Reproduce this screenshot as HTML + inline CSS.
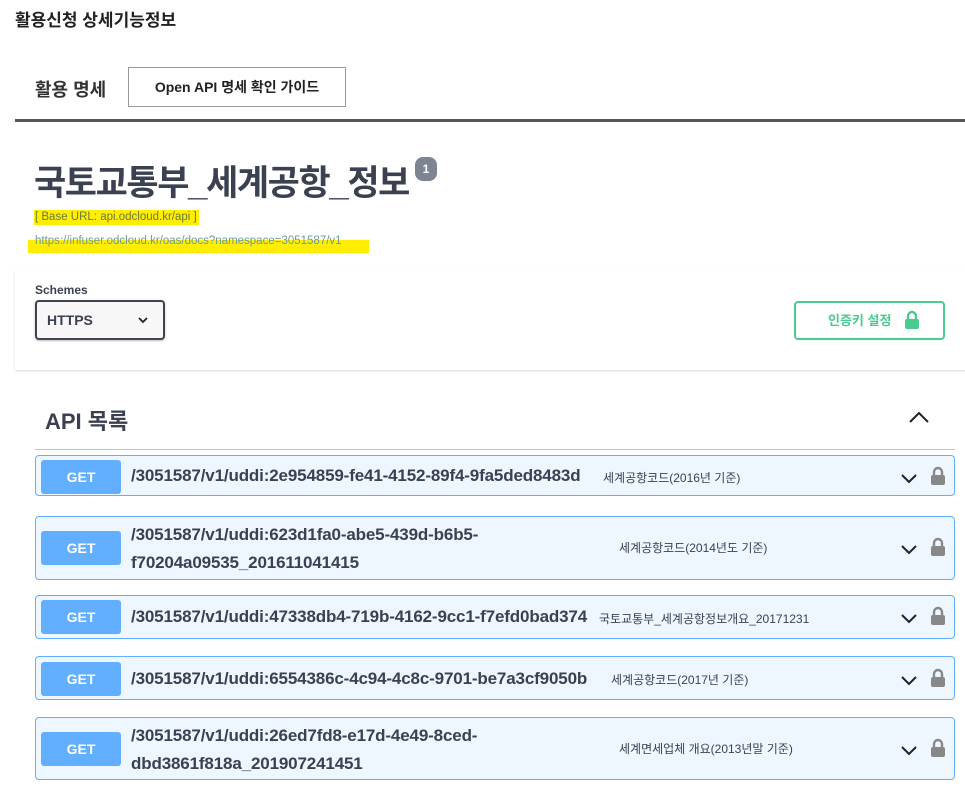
<!DOCTYPE html>
<html><head><meta charset="utf-8"><style>
*{box-sizing:border-box;margin:0;padding:0}
body{width:965px;height:788px;overflow:hidden;background:#fff;font-family:"Liberation Sans","Noto Sans CJK KR",sans-serif;color:#3b4151;position:relative}
.a{position:absolute}
.row{position:absolute;left:35px;width:920px;background:#eef6ff;border:1px solid #61affe;border-radius:4px}
.get{position:absolute;left:5px;width:80px;height:34px;background:#61affe;border-radius:3px;color:#fff;font-weight:700;font-size:14px;text-align:center;line-height:34px}
.path{position:absolute;left:95px;font-size:17px;font-weight:600;color:#3b4151;line-height:28px;letter-spacing:-0.15px}
.desc{position:absolute;font-size:12px;color:#3b4151}
.chev{position:absolute;right:36px}
.lock{position:absolute;right:8px}
</style></head><body>
<div class="a" style="left:15px;top:6px;font-size:17px;font-weight:700;color:#222">활용신청 상세기능정보</div>
<div class="a" style="left:35px;top:76px;font-size:18px;font-weight:700;color:#333">활용 명세</div>
<div class="a" style="left:128px;top:67px;width:218px;height:40px;border:1px solid #999;font-size:14px;font-weight:700;color:#222;text-align:center;line-height:38px">Open API 명세 확인 가이드</div>
<div class="a" style="left:15px;top:119px;width:950px;height:3px;background:#555"></div>

<div class="a" style="left:34px;top:155px;font-size:35px;font-weight:700;color:#3b4151;letter-spacing:-1.4px">국토교통부_세계공항_정보</div>
<div class="a" style="left:415px;top:157px;width:22px;height:24px;background:#7d8492;border-radius:8px;color:#fff;font-size:12px;font-weight:700;text-align:center;line-height:24px">1</div>
<div class="a" style="left:34px;top:210px;height:15px;width:165px;background:#ffee00"></div>
<div class="a" style="left:35px;top:210px;font-size:11.5px;color:#6b7a3b;line-height:15px">[ Base URL: api.odcloud.kr/api ]</div>
<div class="a" style="left:28px;top:240px;height:13px;width:341px;background:#ffee00"></div>
<div class="a" style="left:35px;top:234px;font-size:11.5px;color:#6b9a9b;line-height:14px">https://infuser.odcloud.kr/oas/docs?namespace=3051587/v1</div>

<div class="a" style="left:15px;top:270px;width:960px;height:100px;background:#fff;box-shadow:0 1px 2px rgba(0,0,0,.15)"></div>
<div class="a" style="left:35px;top:283px;font-size:12px;font-weight:700">Schemes</div>
<div class="a" style="left:35px;top:300px;width:130px;height:40px;border:2px solid #41444e;border-radius:4px;background:#f7f7f7;box-shadow:0 1px 2px rgba(0,0,0,.25);font-size:14px;font-weight:700;line-height:36px;padding-left:10px">HTTPS
<svg class="a" style="left:100px;top:13px" width="12" height="10" viewBox="0 0 12 10"><path d="M2 3l4 4 4-4" stroke="#222" stroke-width="1.8" fill="none"/></svg></div>
<div class="a" style="left:794px;top:301px;width:151px;height:39px;border:2px solid #49cc90;border-radius:4px;color:#49cc90;font-size:13px;font-weight:700;line-height:35px;padding-left:32px">인증키 설정
<svg class="a" style="left:108px;top:7px" width="16" height="20" viewBox="0 0 16 20"><path d="M4 10V6a4 4 0 0 1 8 0v4" stroke="#49cc90" stroke-width="2.4" fill="none"/><rect x="1" y="9" width="14" height="10" rx="2" fill="#49cc90"/></svg></div>

<div class="a" style="left:45px;top:404px;font-size:22px;font-weight:700">API 목록</div>
<svg class="a" style="left:908px;top:410px" width="22" height="14" viewBox="0 0 22 14"><path d="M2 12l9-9 9 9" stroke="#222" stroke-width="2" fill="none"/></svg>
<div class="a" style="left:35px;top:449px;width:920px;height:1px;background:#c5c5c5"></div>

<div class="row" style="top:455px;height:41px"><div class="get" style="top:4px">GET</div><div class="path" style="top:6px">/3051587/v1/uddi:2e954859-fe41-4152-89f4-9fa5ded8483d</div><div class="desc" style="left:567px;top:13px">세계공항코드(2016년 기준)</div>
<svg class="chev" style="top:16px" width="18" height="12" viewBox="0 0 18 12"><path d="M2 3l7 7 7-7" stroke="#222" stroke-width="2" fill="none"/></svg>
<svg class="lock" style="top:10px" width="16" height="20" viewBox="0 0 16 20"><path d="M4 10V6a4 4 0 0 1 8 0v4" stroke="#888" stroke-width="2.4" fill="none"/><rect x="1" y="9" width="14" height="10" rx="2" fill="#888"/></svg></div>

<div class="row" style="top:516px;height:64px"><div class="get" style="top:14px">GET</div><div class="path" style="top:4px">/3051587/v1/uddi:623d1fa0-abe5-439d-b6b5-<br>f70204a09535_201611041415</div><div class="desc" style="left:583px;top:22px">세계공항코드(2014년도 기준)</div>
<svg class="chev" style="top:26px" width="18" height="12" viewBox="0 0 18 12"><path d="M2 3l7 7 7-7" stroke="#222" stroke-width="2" fill="none"/></svg>
<svg class="lock" style="top:20px" width="16" height="20" viewBox="0 0 16 20"><path d="M4 10V6a4 4 0 0 1 8 0v4" stroke="#888" stroke-width="2.4" fill="none"/><rect x="1" y="9" width="14" height="10" rx="2" fill="#888"/></svg></div>

<div class="row" style="top:595px;height:44px"><div class="get" style="top:4px">GET</div><div class="path" style="top:7px">/3051587/v1/uddi:47338db4-719b-4162-9cc1-f7efd0bad374</div><div class="desc" style="left:563px;top:14px">국토교통부_세계공항정보개요_20171231</div>
<svg class="chev" style="top:16px" width="18" height="12" viewBox="0 0 18 12"><path d="M2 3l7 7 7-7" stroke="#222" stroke-width="2" fill="none"/></svg>
<svg class="lock" style="top:10px" width="16" height="20" viewBox="0 0 16 20"><path d="M4 10V6a4 4 0 0 1 8 0v4" stroke="#888" stroke-width="2.4" fill="none"/><rect x="1" y="9" width="14" height="10" rx="2" fill="#888"/></svg></div>

<div class="row" style="top:656px;height:44px"><div class="get" style="top:5px">GET</div><div class="path" style="top:8px">/3051587/v1/uddi:6554386c-4c94-4c8c-9701-be7a3cf9050b</div><div class="desc" style="left:575px;top:14px">세계공항코드(2017년 기준)</div>
<svg class="chev" style="top:17px" width="18" height="12" viewBox="0 0 18 12"><path d="M2 3l7 7 7-7" stroke="#222" stroke-width="2" fill="none"/></svg>
<svg class="lock" style="top:11px" width="16" height="20" viewBox="0 0 16 20"><path d="M4 10V6a4 4 0 0 1 8 0v4" stroke="#888" stroke-width="2.4" fill="none"/><rect x="1" y="9" width="14" height="10" rx="2" fill="#888"/></svg></div>

<div class="row" style="top:717px;height:63px"><div class="get" style="top:14px">GET</div><div class="path" style="top:4px">/3051587/v1/uddi:26ed7fd8-e17d-4e49-8ced-<br>dbd3861f818a_201907241451</div><div class="desc" style="left:583px;top:22px">세계면세업체 개요(2013년말 기준)</div>
<svg class="chev" style="top:26px" width="18" height="12" viewBox="0 0 18 12"><path d="M2 3l7 7 7-7" stroke="#222" stroke-width="2" fill="none"/></svg>
<svg class="lock" style="top:20px" width="16" height="20" viewBox="0 0 16 20"><path d="M4 10V6a4 4 0 0 1 8 0v4" stroke="#888" stroke-width="2.4" fill="none"/><rect x="1" y="9" width="14" height="10" rx="2" fill="#888"/></svg></div>
</body></html>
